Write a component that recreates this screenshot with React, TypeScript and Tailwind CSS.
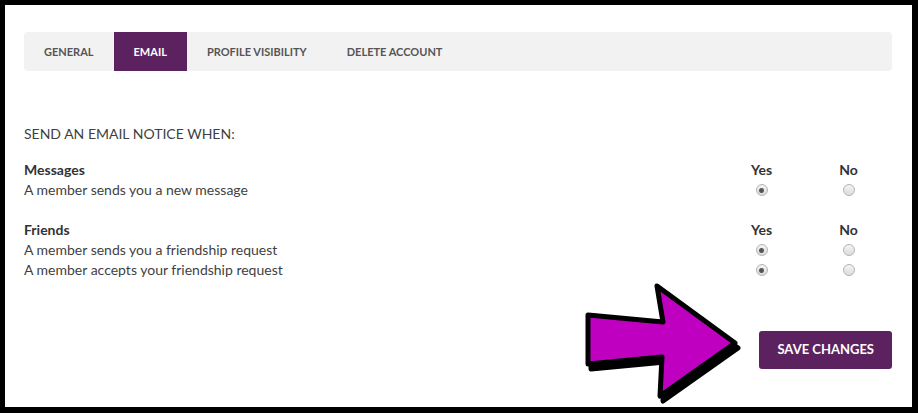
import { useState } from 'react'

const TABS = ['General', 'Email', 'Profile Visibility', 'Delete Account']

type Group = {
  title: string
  items: { id: string; label: string }[]
}

const GROUPS: Group[] = [
  {
    title: 'Messages',
    items: [{ id: 'msg-new', label: 'A member sends you a new message' }],
  },
  {
    title: 'Friends',
    items: [
      { id: 'friend-req', label: 'A member sends you a friendship request' },
      { id: 'friend-acc', label: 'A member accepts your friendship request' },
    ],
  },
]

function Radio({ checked, onClick }: { checked: boolean; onClick: () => void }) {
  return (
    <button
      type="button"
      onClick={onClick}
      className="w-[12px] h-[12px] rounded-full border border-[#b4b4b4] bg-gradient-to-b from-[#f4f4f4] to-[#dcdcdc] flex items-center justify-center"
    >
      {checked && <span className="w-[5px] h-[5px] rounded-full bg-[#555]" />}
    </button>
  )
}

function Arrow() {
  const pts = '8,35 83,42 77,6 155,63 80,116 82,77 8,84'
  return (
    <svg
      className="absolute left-[580px] top-[280px] pointer-events-none"
      width="165"
      height="128"
      viewBox="0 0 165 128"
    >
      <polygon points={pts} transform="translate(3,5)" fill="#000" stroke="#000" strokeWidth="5" strokeLinejoin="round" />
      <polygon points={pts} fill="#c000c0" stroke="#000" strokeWidth="5" strokeLinejoin="round" />
    </svg>
  )
}

export default function App() {
  const [tab, setTab] = useState('Email')
  const [prefs, setPrefs] = useState<Record<string, boolean>>({
    'msg-new': true,
    'friend-req': true,
    'friend-acc': true,
  })

  return (
    <div
      className="relative w-[918px] h-[413px] bg-black pt-[5px] pl-[5px] pr-[6px] pb-[6px]"
      style={{ fontFamily: 'Lato, "Open Sans", sans-serif' }}
    >
      <div className="h-full bg-white pt-[27px] pl-[19px] pr-[20px]">
        <div className="flex h-[39px] bg-[#f2f2f2] rounded-[4px] overflow-hidden">
          {TABS.map((t) => (
            <button
              key={t}
              type="button"
              onClick={() => setTab(t)}
              className={
                t === tab
                  ? 'px-5 pt-[2px] h-full uppercase text-[11px] font-bold bg-[#5c2260] text-white'
                  : 'px-5 pt-[2px] h-full uppercase text-[11px] font-bold text-[#555]'
              }
            >
              {t}
            </button>
          ))}
        </div>

        <div className="mt-[53px] text-[14px] leading-[20px] text-[#3f3f3f] uppercase">
          Send an email notice when:
        </div>

        <div className="mt-[16px] flex flex-col gap-[20px]">
          {GROUPS.map((g) => (
            <div key={g.title}>
              <div className="grid grid-cols-[1fr_87px_87px] items-center">
                <div className="text-[14px] leading-[20px] font-bold text-[#333]">{g.title}</div>
                <div className="text-[14px] leading-[20px] font-bold text-[#333] text-center">Yes</div>
                <div className="text-[14px] leading-[20px] font-bold text-[#333] text-center">No</div>
              </div>
              {g.items.map((item) => (
                <div key={item.id} className="grid grid-cols-[1fr_87px_87px] items-center">
                  <div className="text-[14px] leading-[20px] text-[#3f3f3f]">{item.label}</div>
                  <div className="flex justify-center">
                    <Radio
                      checked={prefs[item.id]}
                      onClick={() => setPrefs({ ...prefs, [item.id]: true })}
                    />
                  </div>
                  <div className="flex justify-center">
                    <Radio
                      checked={!prefs[item.id]}
                      onClick={() => setPrefs({ ...prefs, [item.id]: false })}
                    />
                  </div>
                </div>
              ))}
            </div>
          ))}
        </div>

        <div className="mt-[51px] flex justify-end">
          <button
            type="button"
            className="h-[38px] px-[18px] rounded-[3px] bg-[#5c2260] text-white text-[13px] font-bold uppercase"
          >
            Save Changes
          </button>
        </div>
      </div>
      <Arrow />
    </div>
  )
}
